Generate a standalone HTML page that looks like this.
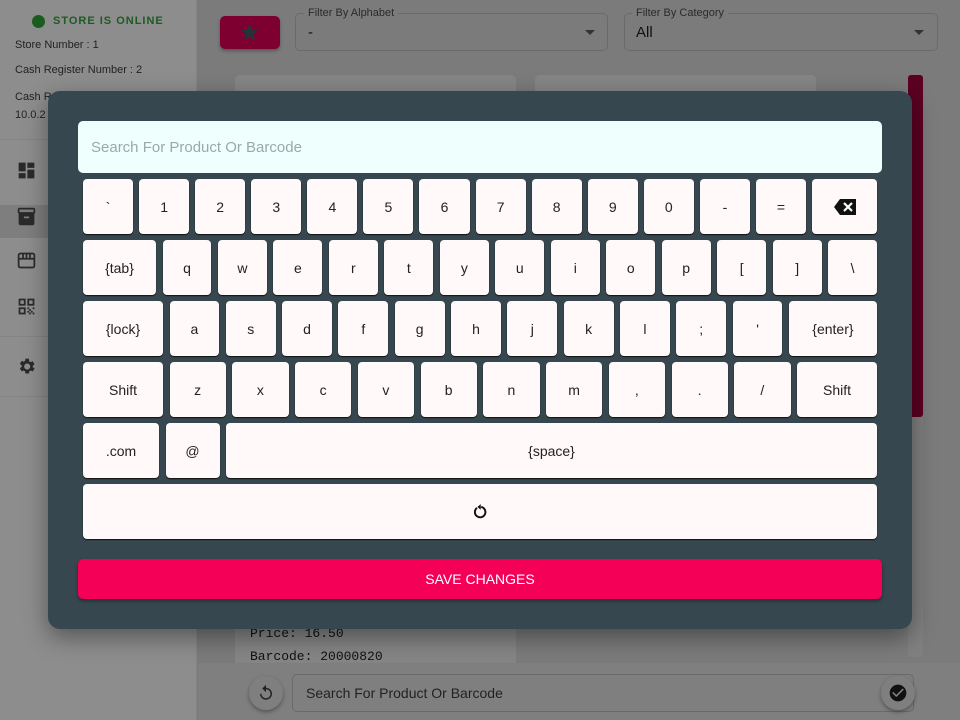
<!DOCTYPE html>
<html><head><meta charset="utf-8"><style>
*{box-sizing:border-box;margin:0;padding:0}
body{width:960px;height:720px;position:relative;overflow:hidden;background:#7b7b7b;font-family:"Liberation Sans",Arial,sans-serif}
.abs{position:absolute}
.side{left:0;top:0;width:197px;height:720px;background:#8d8d8d;border-right:1px solid #858585}
.side .t{font-size:11px;color:#222;position:absolute;left:15px}
.modal{left:48px;top:91px;width:864px;height:538px;background:#37474f;border-radius:12px;box-shadow:0 8px 24px rgba(0,0,0,.4)}
.inp{left:30px;top:30px;width:804px;height:52px;background:#effffe;border-radius:5px;color:#9aa;font-size:15px;padding:18px 13px}
.row{position:absolute;left:35px;width:794px;display:flex;gap:6.5px;height:55px}
.k{flex:1;background:#fff9f9;border-radius:4px;box-shadow:0 1px 1px #111;display:flex;align-items:center;justify-content:center;font-size:14px;color:#222}
.save{left:30px;top:468px;width:804px;height:40px;background:#f50057;border-radius:5px;color:#fff;font-size:14px;display:flex;align-items:center;justify-content:center;box-shadow:0 2px 3px rgba(0,0,0,.4)}
</style></head><body>
<div class="abs side">
 <div class="abs" style="left:32px;top:15px;width:13px;height:13px;border-radius:50%;background:#1a5c1e"></div>
 <div class="abs" style="left:53px;top:15px;font-size:11px;letter-spacing:1px;font-weight:bold;color:#1e5a22">STORE IS ONLINE</div>
 <div class="t" style="top:39px">Store Number : 1</div>
 <div class="t" style="top:64px">Cash Register Number : 2</div>
 <div class="t" style="top:91px">Cash R</div>
 <div class="t" style="top:109px">10.0.2</div>
 <div class="abs" style="left:0;top:139px;width:197px;border-top:1px solid #848484"></div>
 <div class="abs" style="left:0;top:205px;width:197px;height:33px;background:#7e7e7e"></div>
 <div class="abs" style="left:0;top:336px;width:197px;border-top:1px solid #848484"></div>
 <div class="abs" style="left:0;top:396px;width:197px;border-top:1px solid #848484"></div>
 <svg class="abs" style="left:16px;top:160px" width="21" height="21" viewBox="0 0 24 24" fill="#2a2a2a"><path d="M3 13h8V3H3zm0 8h8v-6H3zm10 0h8V11h-8zm0-18v6h8V3z"/></svg>
 <svg class="abs" style="left:16px;top:206px" width="21" height="21" viewBox="0 0 24 24" fill="#2a2a2a"><path d="M20 2H4c-1 0-2 .9-2 2v3c0 .7.4 1.4 1 1.7V20c0 1.1 1.1 2 2 2h14c.9 0 2-.9 2-2V8.7c.6-.3 1-1 1-1.7V4c0-1.1-1-2-2-2zm-5 12H9v-2h6zm5-7H4V4h16z"/></svg>
 <svg class="abs" style="left:16px;top:250px" width="21" height="21" viewBox="0 0 24 24" fill="none" stroke="#2a2a2a" stroke-width="2"><rect x="3" y="4" width="18" height="16" rx="2"/><path d="M3 10h18M8 4v6M12 4v6M16 4v6"/></svg>
 <svg class="abs" style="left:16px;top:296px" width="21" height="21" viewBox="0 0 24 24" fill="#2a2a2a"><path d="M3 11h8V3H3zm2-6h4v4H5zM3 21h8v-8H3zm2-6h4v4H5zM13 3v8h8V3zm6 6h-4V5h4zM13 13h2v2h-2zm2 2h2v2h-2zm-2 2h2v2h-2zm4 0h2v2h-2zm2-4h2v2h-2zm0 6h2v2h-2zm-2-2h2v2h-2zm-2 2h2v2h-2z"/></svg>
 <svg class="abs" style="left:16px;top:356px" width="21" height="21" viewBox="0 0 24 24" fill="#2a2a2a"><path d="M19.1 12.9a7 7 0 0 0 0-1.8l2.1-1.6-2-3.5-2.5 1a7 7 0 0 0-1.6-.9L14.8 3h-4l-.4 2.6a7 7 0 0 0-1.5.9l-2.5-1-2 3.5 2.1 1.6a7 7 0 0 0 0 1.8l-2.1 1.6 2 3.5 2.5-1c.5.4 1 .7 1.5.9l.4 2.6h4l.4-2.6c.6-.2 1.1-.5 1.6-.9l2.5 1 2-3.5zM12.8 15.5a3.5 3.5 0 1 1 0-7 3.5 3.5 0 0 1 0 7z"/></svg>
</div>
<div class="abs" style="left:220px;top:16px;width:60px;height:33px;background:#7e0030;border-radius:5px;box-shadow:0 2px 3px rgba(0,0,0,.3)"></div>
<svg class="abs" style="left:239px;top:22px" width="21" height="21" viewBox="0 0 24 24" fill="#263238"><path d="M12 17.3 18.2 21l-1.6-7L22 9.2l-7.2-.6L12 2 9.2 8.6 2 9.2 7.5 14l-1.7 7z"/></svg>
<div class="abs" style="left:295px;top:13px;width:313px;height:38px;border:1px solid #6a6a6a;border-radius:5px"></div>
<div class="abs" style="left:304px;top:7px;font-size:11px;color:#2a2a2a;background:#7b7b7b;padding:0 4px">Filter By Alphabet</div>
<div class="abs" style="left:308px;top:24px;font-size:15px;color:#111">-</div>
<div class="abs" style="left:585px;top:30px;border:5px solid transparent;border-top-color:#333"></div>
<div class="abs" style="left:624px;top:13px;width:314px;height:38px;border:1px solid #6a6a6a;border-radius:5px"></div>
<div class="abs" style="left:632px;top:7px;font-size:11px;color:#2a2a2a;background:#7b7b7b;padding:0 4px">Filter By Category</div>
<div class="abs" style="left:636px;top:24px;font-size:15px;color:#111">All</div>
<div class="abs" style="left:914px;top:30px;border:5px solid transparent;border-top-color:#333"></div>
<div class="abs" style="left:235px;top:75px;width:281px;height:600px;background:#858585;border-radius:5px"></div>
<div class="abs" style="left:535px;top:75px;width:281px;height:40px;background:#858585;border-radius:5px"></div>
<div class="abs" style="left:908px;top:75px;width:15px;height:342px;background:#5c0022;border-radius:3px"></div>
<div class="abs" style="left:908px;top:417px;width:15px;height:240px;background:#808080;border-radius:3px"></div>
<div class="abs" style="left:250px;top:626px;font-family:'Liberation Mono',monospace;font-size:13px;color:#111">Price: 16.50</div>
<div class="abs" style="left:250px;top:650px;font-family:'Liberation Mono',monospace;font-size:13px;color:#111;line-height:13px;height:12px;overflow:hidden">Barcode: 20000820</div>
<div class="abs" style="left:198px;top:663px;width:762px;height:57px;background:#7f7f7f"></div>
<div class="abs" style="left:249px;top:676px;width:34px;height:34px;border-radius:50%;background:#7f7f7f;box-shadow:0 2px 4px rgba(0,0,0,.35)"></div>
<svg class="abs" style="left:257px;top:684px" width="18" height="18" viewBox="0 0 24 24" fill="#222"><path d="M12 5V1L7 6l5 5V7c3.3 0 6 2.7 6 6s-2.7 6-6 6-6-2.7-6-6H4c0 4.4 3.6 8 8 8s8-3.6 8-8-3.6-8-8-8z"/></svg>
<div class="abs" style="left:292px;top:674px;width:622px;height:38px;border:1px solid #6a6a6a;border-radius:5px;font-size:14px;color:#222;padding:10px 13px">Search For Product Or Barcode</div>
<div class="abs" style="left:881px;top:676px;width:34px;height:34px;border-radius:50%;background:#7f7f7f;box-shadow:0 2px 4px rgba(0,0,0,.35)"></div>
<svg class="abs" style="left:888px;top:683px" width="20" height="20" viewBox="0 0 24 24" fill="#111"><path d="M12 2a10 10 0 1 0 0 20 10 10 0 0 0 0-20zm-2 15-5-5 1.4-1.4 3.6 3.6 7.6-7.6L19 8z"/></svg>

<div class="abs modal">
 <div class="abs inp">Search For Product Or Barcode</div>
 <div class="row" style="top:88px;gap:6px"><div class="k">`</div><div class="k">1</div><div class="k">2</div><div class="k">3</div><div class="k">4</div><div class="k">5</div><div class="k">6</div><div class="k">7</div><div class="k">8</div><div class="k">9</div><div class="k">0</div><div class="k">-</div><div class="k">=</div><div class="k" style="flex:0 0 65px"><svg width="22" height="16" viewBox="0 0 22 16"><path d="M6 0h16v16H6L0 8z" fill="#111"/><path d="M10 4l8 8M18 4l-8 8" stroke="#fff" stroke-width="2.2"/></svg></div></div>
 <div class="row" style="top:149px"><div class="k" style="flex:0 0 73px">{tab}</div><div class="k">q</div><div class="k">w</div><div class="k">e</div><div class="k">r</div><div class="k">t</div><div class="k">y</div><div class="k">u</div><div class="k">i</div><div class="k">o</div><div class="k">p</div><div class="k">[</div><div class="k">]</div><div class="k">\</div></div>
 <div class="row" style="top:210px"><div class="k" style="flex:0 0 80px">{lock}</div><div class="k">a</div><div class="k">s</div><div class="k">d</div><div class="k">f</div><div class="k">g</div><div class="k">h</div><div class="k">j</div><div class="k">k</div><div class="k">l</div><div class="k">;</div><div class="k">'</div><div class="k" style="flex:0 0 88px">{enter}</div></div>
 <div class="row" style="top:271px"><div class="k" style="flex:0 0 80px">Shift</div><div class="k">z</div><div class="k">x</div><div class="k">c</div><div class="k">v</div><div class="k">b</div><div class="k">n</div><div class="k">m</div><div class="k">,</div><div class="k">.</div><div class="k">/</div><div class="k" style="flex:0 0 80px">Shift</div></div>
 <div class="row" style="top:332px"><div class="k" style="flex:0 0 76px">.com</div><div class="k" style="flex:0 0 54px">@</div><div class="k">{space}</div></div>
 <div class="row" style="top:393px"><div class="k"><svg width="18" height="18" viewBox="0 0 24 24" fill="none" stroke="#111" stroke-width="2.6"><path d="M8 6.5A7 7 0 1 0 13.5 5.2"/><path d="M13 1.5v7.5l-4.5-3.7z" fill="#111" stroke="none"/></svg></div></div>
 <div class="abs save">SAVE CHANGES</div>
</div>
</body></html>
